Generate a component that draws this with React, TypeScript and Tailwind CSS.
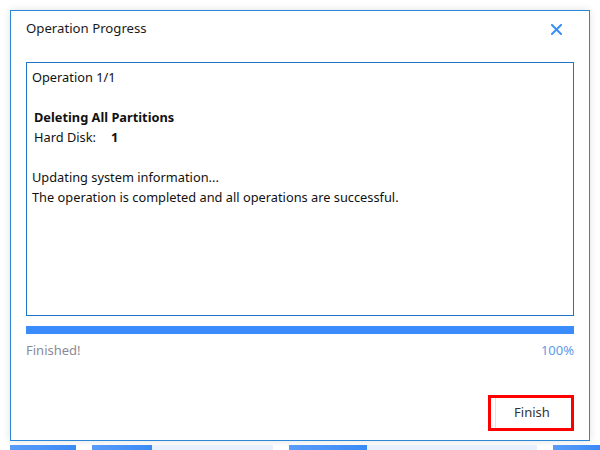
import React from "react";

export default function App() {
  const font = { fontFamily: '"Noto Sans", "Open Sans", sans-serif' };
  return (
    <div className="w-[600px] h-[450px] bg-white overflow-hidden relative" style={font}>
      <div className="pt-[10px] px-[10px]">
        <div className="h-[431px] border border-[#2a86d6] bg-white shadow-[0_0_8px_rgba(0,0,0,0.12)] flex flex-col px-[15px]">
          <div className="h-[51px] flex items-start justify-between pt-[7px]">
            <span className="text-[13.2px] leading-[20px] text-[#1a1a1a]">Operation Progress</span>
            <svg width="11" height="11" viewBox="0 0 11 11" className="mt-[6px] mr-[12px]">
              <path d="M1 1 L10 10 M10 1 L1 10" stroke="#3b8ef5" strokeWidth="2" strokeLinecap="square" />
            </svg>
          </div>
          <div className="h-[254px] border border-[#1f73c6] px-[5px] pt-[4px] text-[12.8px] leading-[20px] text-[#111]">
            <div>Operation 1/1</div>
            <div className="h-[20px]" />
            <div className="pl-[2px] font-bold">Deleting All Partitions</div>
            <div className="pl-[2px] flex">
              <span className="w-[77px]">Hard Disk:</span>
              <span className="font-bold">1</span>
            </div>
            <div className="h-[20px]" />
            <div>Updating system information...</div>
            <div>The operation is completed and all operations are successful.</div>
          </div>
          <div className="mt-[10px] h-[8px] bg-[#3a8bfb]" />
          <div className="mt-[7px] flex justify-between text-[13px] leading-[18px]">
            <span className="text-[#8a8a96]">Finished!</span>
            <span className="text-[#5b9ce8]">100%</span>
          </div>
          <div className="mt-[36px] flex justify-end">
            <div className="w-[86px] h-[36px] border-[3px] border-[#ff0000] flex items-center text-[13px] text-[#333]">
              <div className="h-full w-[1px] ml-[4px] bg-[#dde3ea]" />
              <span className="flex-1 text-center pr-[3px]">Finish</span>
            </div>
          </div>
        </div>
      </div>
      <div className="mt-[4px] h-[5px] flex">
        <div className="w-[10px] bg-white" />
        <div className="w-[66px] bg-gradient-to-r from-[#5a9cf8] to-[#3a8af6]" />
        <div className="w-[16px] bg-white" />
        <div className="w-[60px] bg-gradient-to-r from-[#5a9cf8] to-[#3a8af6]" />
        <div className="w-[121px] bg-[#e7f0fc]" />
        <div className="w-[16px] bg-white" />
        <div className="w-[78px] bg-gradient-to-r from-[#5a9cf8] to-[#3a8af6]" />
        <div className="w-[170px] bg-[#e7f0fc]" />
        <div className="w-[16px] bg-white" />
        <div className="flex-1 bg-gradient-to-r from-[#5a9cf8] to-[#3a8af6]" />
      </div>
    </div>
  );
}
